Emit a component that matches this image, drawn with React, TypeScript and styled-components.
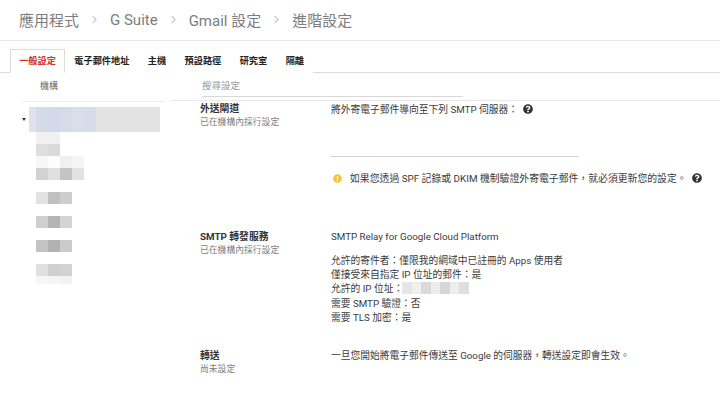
import React from "react"
import styled, { createGlobalStyle } from "styled-components"
import { FaExclamationCircle, FaQuestionCircle } from "react-icons/fa"
import { ChevronRight } from "lucide-react"

const GlobalStyle = createGlobalStyle`
  html, body {
    margin: 0;
    padding: 0;
    background-color: #fff;
  }
  body {
    width: 720px;
    height: 407px;
    overflow: hidden;
    font-family: Roboto, "Noto Sans CJK TC", sans-serif;
    color: #333;
  }
`

const crumbs = ["應用程式", "G Suite", "Gmail 設定", "進階設定"]
const tabs = ["一般設定", "電子郵件地址", "主機", "預設路徑", "研究室", "隔離"]

// blurred organisation tree, one row per 12px mosaic line
const treeRows: { height: number; cells: string[] }[] = [
  { height: 12, cells: ["#f1f1f1", "#f0f0f0"] },
  { height: 12, cells: ["#dedede", "#dadada"] },
  { height: 12, cells: ["#f7f7f7", "#fdfdfd", "#f0f0f0", "#f5f5f5"] },
  { height: 12, cells: ["#d2d2d2", "#e0e0e0", "#c4c4c4", "#e2e2e2"] },
  { height: 12, cells: [] },
  { height: 12, cells: ["#e2e2e2", "#c0c0c0", "#cdcdcd"] },
  { height: 12, cells: [] },
  { height: 12, cells: ["#cfcfcf", "#b4b4b4", "#d4d4d4"] },
  { height: 12, cells: [] },
  { height: 12, cells: ["#c4c4c4", "#b2b2b2", "#cbcbcb"] },
  { height: 12, cells: [] },
  { height: 12, cells: ["#e0e0e0", "#d0d0d0", "#d2d2d2"] },
  { height: 8, cells: ["#f7f7f7", "#f5f5f5", "#f3f3f3"] },
]

const rootCells = ["#d4dae8", "#d2d9e8", "#d5dbe8", "#d9dfe8", "#d6dce9"]
const ipCells = ["#e6e6e6", "#f0f0f0", "#d8dadc", "#ececec", "#d6d6d6", "#eeeeee", "#dcdee0"]

export default function App() {
  return (
    <Page>
      <GlobalStyle />
      <Breadcrumbs>
        {crumbs.map((crumb, i) => (
          <React.Fragment key={crumb}>
            {i > 0 && (
              <ChevronSlot>
                <ChevronRight size={13} strokeWidth={1.4} />
              </ChevronSlot>
            )}
            <Crumb>{crumb}</Crumb>
          </React.Fragment>
        ))}
      </Breadcrumbs>
      <Tabs>
        {tabs.map((tab, i) => (
          <Tab key={tab} $active={i === 0}>
            {tab}
          </Tab>
        ))}
      </Tabs>
      <Body>
        <Sidebar>
          <SideHeader>機構</SideHeader>
          <Tree>
            <RootRow>
              <Caret />
              <RootBar>
                {rootCells.map((color, i) => (
                  <Cell key={i} $color={color} />
                ))}
              </RootBar>
            </RootRow>
            {treeRows.map((row, i) => (
              <TreeRow key={i} $height={row.height}>
                {row.cells.map((color, j) => (
                  <Cell key={j} $color={color} />
                ))}
              </TreeRow>
            ))}
          </Tree>
        </Sidebar>
        <Main>
          <SearchBox>
            <SearchLabel>搜尋設定</SearchLabel>
          </SearchBox>
          <Section $height={128}>
            <SectionLabel>
              <SectionTitle>外送閘道</SectionTitle>
              <SectionNote>已在機構內採行設定</SectionNote>
            </SectionLabel>
            <SectionBody>
              <LineWithIcon>
                將外寄電子郵件導向至下列 SMTP 伺服器：
                <HelpIcon />
              </LineWithIcon>
              <InputLine />
              <Warning>
                <WarningIcon />
                如果您透過 SPF 記錄或 DKIM 機制驗證外寄電子郵件，就必須更新您的設定。
                <HelpIcon />
              </Warning>
            </SectionBody>
          </Section>
          <Section $height={119}>
            <SectionLabel>
              <SectionTitle>SMTP 轉發服務</SectionTitle>
              <SectionNote>已在機構內採行設定</SectionNote>
            </SectionLabel>
            <SectionBody>
              <BodyLine>SMTP Relay for Google Cloud Platform</BodyLine>
              <Details>
                <BodyLine>允許的寄件者：僅限我的網域中已註冊的 Apps 使用者</BodyLine>
                <BodyLine>僅接受來自指定 IP 位址的郵件：是</BodyLine>
                <BodyLine>
                  允許的 IP 位址：
                  <IpBlur>
                    {ipCells.map((color, i) => (
                      <IpCell key={i} $color={color} />
                    ))}
                  </IpBlur>
                </BodyLine>
                <BodyLine>需要 SMTP 驗證：否</BodyLine>
                <BodyLine>需要 TLS 加密：是</BodyLine>
              </Details>
            </SectionBody>
          </Section>
          <Section $height={50}>
            <SectionLabel>
              <SectionTitle>轉送</SectionTitle>
              <SectionNote>尚未設定</SectionNote>
            </SectionLabel>
            <SectionBody>
              <BodyLine>一旦您開始將電子郵件傳送至 Google 的伺服器，轉送設定即會生效。</BodyLine>
            </SectionBody>
          </Section>
        </Main>
      </Body>
    </Page>
  )
}

const Page = styled.div`
  width: 720px;
  height: 407px;
  overflow: hidden;
`

const Breadcrumbs = styled.div`
  display: flex;
  align-items: center;
  box-sizing: border-box;
  height: 41px;
  padding: 0 0 1px 19px;
  border-bottom: 1px solid #e8e8e8;
  font-size: 15px;
  color: #7d7d7d;
`

const Crumb = styled.span`
  white-space: nowrap;
`

const ChevronSlot = styled.span`
  display: flex;
  justify-content: center;
  width: 31px;
  color: #8a8a8a;
`

const Tabs = styled.div`
  display: flex;
  align-items: flex-end;
  box-sizing: border-box;
  height: 32px;
  padding-left: 10px;
  border-bottom: 1px solid #dcdcdc;
`

const Tab = styled.div<{ $active?: boolean }>`
  box-sizing: border-box;
  height: 24px;
  margin-bottom: -1px;
  padding: 0 8.2px;
  line-height: 21px;
  font-size: 9.2px;
  font-weight: 700;
  white-space: nowrap;
  color: ${(p) => (p.$active ? "#d0342c" : "#222")};
  background-color: #fff;
  border: 1px solid ${(p) => (p.$active ? "#dcdcdc" : "transparent")};
  border-bottom-color: ${(p) => (p.$active ? "#fff" : "transparent")};
`

const Body = styled.div`
  display: grid;
  grid-template-columns: 170px 1fr;
`

const Sidebar = styled.div`
  padding-left: 22px;
`

const SideHeader = styled.div`
  box-sizing: border-box;
  width: 142px;
  height: 29px;
  padding: 6px 0 0 18px;
  border-bottom: 1px solid #ececec;
  font-size: 9px;
  color: #666;
`

const Tree = styled.div`
  display: flex;
  flex-direction: column;
  padding-top: 5px;
`

const RootRow = styled.div`
  display: flex;
  align-items: center;
  height: 25px;
`

const Caret = styled.div`
  width: 0;
  height: 0;
  margin-right: 3px;
  border-left: 2.5px solid transparent;
  border-right: 2.5px solid transparent;
  border-top: 3px solid #333;
`

const RootBar = styled.div`
  display: flex;
  box-sizing: border-box;
  width: 131px;
  height: 25px;
  padding-left: 7px;
  background: linear-gradient(to right, #dfe2ea 7px, #e3e3e3 7px);
`

const TreeRow = styled.div<{ $height: number }>`
  display: flex;
  height: ${(p) => p.$height}px;
  padding-left: 14px;
`

const Cell = styled.div<{ $color: string }>`
  width: 12px;
  background-color: ${(p) => p.$color};
`

const Main = styled.div`
  display: flex;
  flex-direction: column;
`

const SearchBox = styled.div`
  height: 28px;
  box-sizing: border-box;
  border-bottom: 1px solid #e8e8e8;
`

const SearchLabel = styled.div`
  box-sizing: border-box;
  width: 261px;
  height: 24px;
  margin-left: 32px;
  padding-top: 5px;
  border-bottom: 1px solid #d8d8d8;
  font-size: 9.5px;
  color: #9a9a9a;
`

const Section = styled.div<{ $height: number }>`
  display: flex;
  height: ${(p) => p.$height}px;
`

const SectionLabel = styled.div`
  width: 131px;
  margin-left: 30px;
  flex-shrink: 0;
`

const SectionTitle = styled.div`
  height: 14px;
  line-height: 14px;
  font-size: 9.8px;
  font-weight: 700;
  color: #333;
  margin-top: 1px;
`

const SectionNote = styled.div`
  height: 13px;
  line-height: 13px;
  font-size: 8.8px;
  color: #7d7d7d;
`

const SectionBody = styled.div`
  display: flex;
  flex-direction: column;
  font-size: 9.75px;
  color: #3a3a3a;
`

const LineWithIcon = styled.div`
  display: flex;
  align-items: center;
  height: 14px;
  margin-top: 1px;
  white-space: nowrap;
`

const BodyLine = styled.div`
  display: flex;
  align-items: center;
  height: 14.4px;
  white-space: nowrap;
`

const InputLine = styled.div`
  width: 249px;
  height: 1px;
  margin: 40px 0 0 -1px;
  background-color: #d4d4d4;
`

const Warning = styled.div`
  display: flex;
  align-items: center;
  height: 14px;
  margin-top: 14px;
  white-space: nowrap;
  font-size: 9.85px;
`

const HelpIcon = styled(FaQuestionCircle)`
  width: 10px;
  height: 10px;
  margin-left: 5px;
  color: #333;
`

const WarningIcon = styled(FaExclamationCircle)`
  width: 9px;
  height: 9px;
  margin: 0 8px 0 2px;
  color: #f5c33b;
`

const Details = styled.div`
  display: flex;
  flex-direction: column;
  margin-top: 9px;
`

const IpBlur = styled.div`
  display: flex;
  height: 12px;
  margin-left: -1px;
`

const IpCell = styled.div<{ $color: string }>`
  width: 9.5px;
  background-color: ${(p) => p.$color};
`
